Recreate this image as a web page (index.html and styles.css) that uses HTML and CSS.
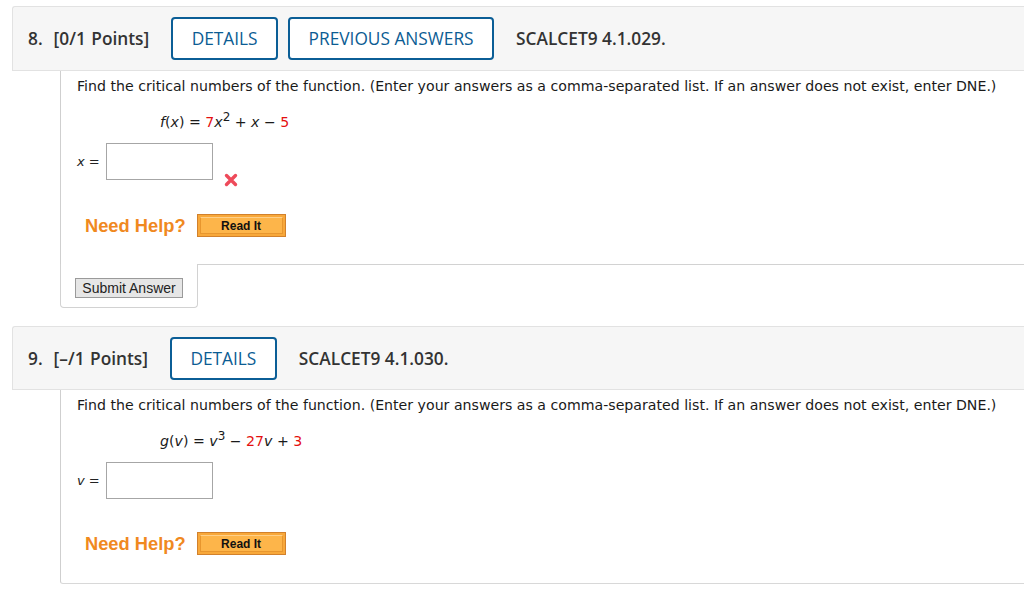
FILE: index.html
```html
<!DOCTYPE html>
<html>
<head>
<meta charset="utf-8">
<link rel="stylesheet" href="styles.css">
</head>
<body>
<div class="page">
  <section class="question">
    <div class="qhead">
      <span class="qnum">8.&nbsp; [0/1 Points]</span>
      <span class="hbtn">DETAILS</span>
      <span class="hbtn">PREVIOUS ANSWERS</span>
      <span class="qref">SCALCET9 4.1.029.</span>
    </div>
    <div class="qbody">
      <p class="prompt">Find the critical numbers of the function. (Enter your answers as a comma-separated list. If an answer does not exist, enter DNE.)</p>
      <p class="math"><i>f</i>(<i>x</i>) = <span class="red">7</span><i>x</i><sup>2</sup> + <i>x</i> − <span class="red">5</span></p>
      <div class="answer">
        <span class="var"><i>x</i> =</span>
        <span class="inputbox"></span>
        <svg class="wrong" width="14" height="14" viewBox="0 0 14 14"><path d="M2.5 2.5 L11.5 11.5 M11.5 2.5 L2.5 11.5" stroke="#ee4a5a" stroke-width="3.4" stroke-linecap="round"/></svg>
      </div>
      <div class="help">
        <span class="needhelp">Need Help?</span>
        <span class="readit"><span class="readit-in">Read It</span></span>
      </div>
    </div>
    <div class="qfoot">
      <div class="tab"><span class="submit">Submit Answer</span></div>
      <div class="fill"></div>
    </div>
  </section>

  <section class="question q2">
    <div class="qhead">
      <span class="qnum">9.&nbsp; [–/1 Points]</span>
      <span class="hbtn">DETAILS</span>
      <span class="qref">SCALCET9 4.1.030.</span>
    </div>
    <div class="qbody last">
      <p class="prompt">Find the critical numbers of the function. (Enter your answers as a comma-separated list. If an answer does not exist, enter DNE.)</p>
      <p class="math"><i>g</i>(<i>v</i>) = <i>v</i><sup>3</sup> − <span class="red">27</span><i>v</i> + <span class="red">3</span></p>
      <div class="answer">
        <span class="var"><i>v</i> =</span>
        <span class="inputbox"></span>
      </div>
      <div class="help">
        <span class="needhelp">Need Help?</span>
        <span class="readit"><span class="readit-in">Read It</span></span>
      </div>
    </div>
  </section>
</div>
</body>
</html>
```

FILE: styles.css
```css
* { box-sizing: border-box; }
html, body { margin: 0; padding: 0; background: #fff; }
.page { padding: 6px 0 0 12px; }

.qhead {
  display: flex;
  align-items: center;
  height: 65px;
  background: #f6f6f6;
  border: 1px solid #e2e2e2;
  border-right: none;
  border-top-left-radius: 3px;
  padding-left: 15px;
  font-family: "Open Sans", sans-serif;
  font-size: 17.3px;
  font-weight: 600;
  color: #333;
}
.q2 .qhead { height: 64px; }
.qnum { margin-right: 22px; white-space: pre; word-spacing: 1px; }
.hbtn {
  display: flex;
  align-items: center;
  height: 43px;
  padding: 0 18.5px;
  border: 2px solid #0b5e96;
  border-radius: 4px;
  color: #0b5c93;
  font-weight: 500;
  margin-right: 10px;
  background: #fff;
}
.hbtn + .qref { margin-left: 12px; }

.qbody {
  margin-left: 48px;
  border-left: 1px solid #cfcfcf;
  padding: 5px 0 27px 16px;
  font-family: "DejaVu Sans", Verdana, sans-serif;
  font-size: 14.15px;
  color: #1a1a1a;
}
.qbody.last {
  padding-bottom: 28px;
  border-bottom: 1px solid #d8d8d8;
  border-bottom-left-radius: 3px;
}
.prompt { margin: 0; line-height: 20px; white-space: nowrap; }
.math { margin: 16px 0 0 83px; line-height: 20px; }
.math sup { font-size: 12px; line-height: 0; vertical-align: 6px; }
.red { color: #e41010; }

.answer {
  display: flex;
  align-items: center;
  margin-top: 11px;
  height: 37px;
}
.var { width: 29px; font-size: 13px; color: #222; }
.inputbox {
  width: 107px;
  height: 37px;
  border: 1px solid #a6a6a6;
  background: #fff;
}
.wrong { align-self: flex-end; margin: 0 0 -7px 11px; }

.help {
  display: flex;
  align-items: center;
  margin-top: 34px;
  padding-left: 8px;
}
.q2 .help { margin-top: 33px; }
.needhelp {
  font-family: "Liberation Sans", Arial, sans-serif;
  font-weight: bold;
  font-size: 18.3px;
  color: #f0891f;
  margin-right: 11px;
}
.readit {
  display: block;
  width: 89px;
  height: 23px;
  background: #f8a83a;
  border: 1px solid #d2812c;
  padding: 2px;
}
.readit-in {
  display: flex;
  align-items: center;
  justify-content: center;
  height: 100%;
  background: #fdb54a;
  border: 1px solid #e8962e;
  border-top-color: #ffd089;
  font-family: "Liberation Sans", Arial, sans-serif;
  font-weight: bold;
  font-size: 12px;
  color: #111;
}

.qfoot { display: flex; margin-left: 48px; }
.tab {
  width: 138px;
  border: 1px solid #d2d2d2;
  border-top: none;
  border-radius: 0 0 4px 4px;
  padding: 14px 0 9px 14px;
}
.fill { flex: 1; border-top: 1px solid #d2d2d2; }
.submit {
  display: flex;
  align-items: center;
  justify-content: center;
  width: 108px;
  height: 20px;
  background: #e6e6e6;
  border: 1px solid #9a9a9a;
  font-family: "Liberation Sans", Arial, sans-serif;
  font-size: 14px;
  color: #222;
}

.q2 { margin-top: 18px; }
```
